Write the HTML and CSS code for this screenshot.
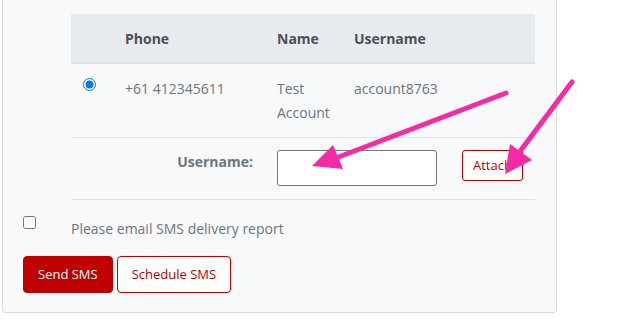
FILE: index.html
```html
<!DOCTYPE html>
<html>
<head>
<meta charset="utf-8">
<link rel="stylesheet" href="styles.css">
</head>
<body>
<div class="card">
  <table class="recipients">
    <colgroup>
      <col class="c-sel"><col class="c-phone"><col class="c-name"><col class="c-user">
    </colgroup>
    <thead>
      <tr><th></th><th>Phone</th><th>Name</th><th>Username</th></tr>
    </thead>
    <tbody>
      <tr class="account-row">
        <td><input class="radio" type="radio" name="acct" checked></td>
        <td>+61 412345611</td>
        <td>Test<br>Account</td>
        <td>account8763</td>
      </tr>
      <tr class="attach-line">
        <td colspan="2" class="label">Username:</td>
        <td colspan="2">
          <div class="attach-row">
            <input class="text-input" type="text">
            <button class="btn btn-outline btn-sm">Attach</button>
          </div>
        </td>
      </tr>
    </tbody>
  </table>
  <div class="check-row">
    <input class="check" type="checkbox">
    <span class="check-label">Please email SMS delivery report</span>
  </div>
  <div class="actions">
    <button class="btn btn-primary">Send SMS</button>
    <button class="btn btn-outline">Schedule SMS</button>
  </div>
</div>
<svg class="arrows" width="631" height="325" viewBox="0 0 631 325">
  <line x1="506" y1="93" x2="336" y2="158" stroke="#f52aa6" stroke-width="5" stroke-linecap="round"/>
  <polygon points="312,166 333,145 343,169" fill="#f52aa6"/>
  <line x1="572" y1="82" x2="518" y2="154" stroke="#f52aa6" stroke-width="5" stroke-linecap="round"/>
  <polygon points="505,174 510,144 532,160" fill="#f52aa6"/>
</svg>
</body>
</html>
```

FILE: styles.css
```css
html, body {
  margin: 0;
  padding: 0;
  background: #ffffff;
}
body {
  font-family: "Open Sans", "Noto Sans", sans-serif;
  font-size: 14px;
  line-height: 24px;
  color: #6c757d;
  position: relative;
  width: 631px;
  height: 325px;
  overflow: hidden;
}
.card {
  box-sizing: border-box;
  margin-left: 2px;
  width: 555px;
  background: #f8f9fa;
  border: 1px solid #dadde0;
  border-top: 0;
  border-radius: 0 0 4px 4px;
  padding: 14px 20px 19px 20px;
}
.recipients {
  margin-left: 48px;
  width: 464px;
  border-collapse: separate;
  border-spacing: 0;
  table-layout: fixed;
}
.c-sel { width: 42px; }
.c-phone { width: 152px; }
.c-name { width: 77px; }
.c-user { width: 193px; }
.recipients th {
  background: #e9ecef;
  color: #495057;
  font-weight: 700;
  text-align: left;
  padding: 13px 12px 11px 12px;
  border-bottom: 2px solid #dee2e6;
}
.recipients td {
  vertical-align: top;
  border-bottom: 1px solid #dee2e6;
}
.account-row td {
  padding: 13px 12px 12px 12px;
}
.attach-line td {
  padding: 12px 12px 13px 12px;
}
.radio {
  display: block;
  margin: 1px 0 0 0;
  width: 13px;
  height: 13px;
}
.label {
  text-align: right;
  font-weight: 700;
}
.attach-row {
  display: flex;
  align-items: flex-start;
  gap: 25px;
}
.text-input {
  box-sizing: border-box;
  width: 160px;
  height: 36px;
  margin: 0;
  border: 1px solid #767676;
  border-radius: 3px;
  background: #fff;
}
.btn {
  font-family: "Open Sans", "Noto Sans", sans-serif;
  font-size: 13px;
  line-height: 23px;
  padding: 6px 14px;
  border-radius: 4px;
  border: 1px solid #bf0000;
  margin: 0;
  cursor: pointer;
}
.btn-primary {
  background: #bf0000;
  color: #ffffff;
}
.btn-outline {
  background: #ffffff;
  color: #b30000;
}
.btn-sm {
  padding: 3px 10px;
  line-height: 23px;
  border-radius: 3px;
}
.check-row {
  display: flex;
  align-items: flex-start;
  margin-top: 17px;
}
.check {
  margin: -1px 0 0 0;
  width: 13px;
  height: 13px;
}
.check-label {
  margin-left: 35px;
}
.actions {
  display: flex;
  gap: 4px;
  margin-top: 15px;
}
.arrows {
  position: absolute;
  left: 0;
  top: 0;
  pointer-events: none;
}
```
